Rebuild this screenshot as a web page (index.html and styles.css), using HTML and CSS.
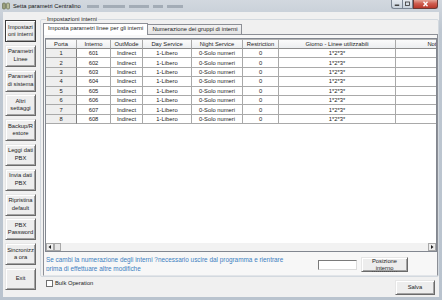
FILE: index.html
```html
<!DOCTYPE html>
<html lang="it">
<head>
  <meta charset="UTF-8">
  <meta name="viewport" content="width=device-width, initial-scale=1.0">
  <title>Setta parametri Centralino</title>
  <link rel="stylesheet" href="styles.css">
</head>
<body>
  <div class="window">
    <div class="titlebar">
      <svg class="app-icon" viewBox="0 0 8 8">
        <rect x="0.5" y="1" width="3" height="6" rx="1" fill="#9a9f7c" stroke="#5f6448" stroke-width="0.6"/>
        <rect x="4.5" y="1" width="3" height="6" rx="1" fill="#b7bb98" stroke="#5f6448" stroke-width="0.6"/>
      </svg>
      <span class="title">Setta parametri Centralino</span>
      <span class="title-blur"><i class="w1"></i><i class="w2"></i><i class="w3"></i><i class="w4"></i><i class="w5"></i></span>
      <div class="controls">
        <span class="ctl min"><svg viewBox="0 0 9 7"><rect x="2.5" y="4" width="4" height="1.2" fill="#333"/></svg></span>
        <span class="ctl max"><svg viewBox="0 0 9 7"><rect x="2.5" y="1.5" width="4" height="3.5" fill="none" stroke="#333" stroke-width="0.8"/></svg></span>
        <span class="ctl close"><svg viewBox="0 0 23 7"><path d="M9.5 1.2 L13.5 5.8 M13.5 1.2 L9.5 5.8" stroke="#fff" stroke-width="1.3"/></svg></span>
      </div>
    </div>

    <div class="client">
      <nav class="sidebar">
        <button class="side-btn active">Impostazi<br>oni interni</button>
        <button class="side-btn">Parametri<br>Linee</button>
        <button class="side-btn">Parametri<br>di sistema</button>
        <button class="side-btn">Altri<br>settaggi</button>
        <button class="side-btn">Backup/R<br>estore</button>
        <button class="side-btn">Leggi dati<br>PBX</button>
        <button class="side-btn">Invia dati<br>PBX</button>
        <button class="side-btn">Ripristina<br>default</button>
        <button class="side-btn">PBX<br>Password</button>
        <button class="side-btn">Sincronizz<br>a ora</button>
        <button class="side-btn">Exit</button>
      </nav>

      <main class="main">
        <fieldset class="group">
          <legend>Impostazioni interni</legend>
          <div class="tabs">
            <span class="tab selected">Imposta parametri linee per gli interni</span>
            <span class="tab">Numerazione dei gruppi di interni</span>
          </div>
          <div class="panel">
            <div class="grid">
              <div class="grid-body">
                <table class="lines">
                  <colgroup>
                    <col class="c-porta"><col class="c-int"><col class="c-out"><col class="c-day">
                    <col class="c-night"><col class="c-restr"><col class="c-giorno"><col class="c-note">
                  </colgroup>
                  <thead>
                    <tr>
                      <th>Porta</th><th>Interno</th><th>OutMode</th><th>Day Service</th>
                      <th>Night Service</th><th>Restriction</th><th>Giorno - Linee utilizzabili</th><th>Note</th>
                    </tr>
                  </thead>
                  <tbody>
                    <tr><td class="rh">1</td><td>601</td><td>Indirect</td><td>1-Libero</td><td>0-Solo numeri</td><td>0</td><td>1*2*3*</td><td></td></tr>
                    <tr><td class="rh">2</td><td>602</td><td>Indirect</td><td>1-Libero</td><td>0-Solo numeri</td><td>0</td><td>1*2*3*</td><td></td></tr>
                    <tr><td class="rh">3</td><td>603</td><td>Indirect</td><td>1-Libero</td><td>0-Solo numeri</td><td>0</td><td>1*2*3*</td><td></td></tr>
                    <tr><td class="rh">4</td><td>604</td><td>Indirect</td><td>1-Libero</td><td>0-Solo numeri</td><td>0</td><td>1*2*3*</td><td></td></tr>
                    <tr><td class="rh">5</td><td>605</td><td>Indirect</td><td>1-Libero</td><td>0-Solo numeri</td><td>0</td><td>1*2*3*</td><td></td></tr>
                    <tr><td class="rh">6</td><td>606</td><td>Indirect</td><td>1-Libero</td><td>0-Solo numeri</td><td>0</td><td>1*2*3*</td><td></td></tr>
                    <tr><td class="rh">7</td><td>607</td><td>Indirect</td><td>1-Libero</td><td>0-Solo numeri</td><td>0</td><td>1*2*3*</td><td></td></tr>
                    <tr><td class="rh">8</td><td>608</td><td>Indirect</td><td>1-Libero</td><td>0-Solo numeri</td><td>0</td><td>1*2*3*</td><td></td></tr>
                  </tbody>
                </table>
              </div>
              <div class="hscroll">
                <span class="sb-btn"><svg viewBox="0 0 6 6"><path d="M4 1 L1.5 3 L4 5 Z" fill="#222"/></svg></span>
                <span class="sb-thumb"></span>
                <span class="sb-track"></span>
                <span class="sb-btn"><svg viewBox="0 0 6 6"><path d="M2 1 L4.5 3 L2 5 Z" fill="#222"/></svg></span>
              </div>
            </div>
            <div class="note-row">
              <p class="note">Se cambi la numerazione degli interni ?necessario uscire dal programma e rientrare<br>prima di effettuare altre modifiche</p>
              <input class="pos-input" type="text">
              <button class="win-btn pos-btn"><span class="focus">Posizione<br>interno</span></button>
            </div>
          </div>
        </fieldset>

        <div class="footer">
          <label class="bulk"><span class="checkbox"></span>Bulk Operation</label>
          <button class="win-btn save-btn">Salva</button>
        </div>
      </main>
    </div>
  </div>
</body>
</html>
```

FILE: styles.css
```css
* {
  box-sizing: border-box;
}
body {
  margin: 0;
  font-family: "Liberation Sans", Arial, sans-serif;
  font-size: 5.8px;
  color: #1b1b1b;
  background: #bcc6d1;
}
.window {
  width: 442px;
  height: 300px;
  display: flex;
  flex-direction: column;
  overflow: hidden;
  background: linear-gradient(#d2d8df, #bec7d1 30px, #b9c3ce);
}

/* title bar */
.titlebar {
  height: 12px;
  display: flex;
  align-items: center;
  padding-left: 2px;
}
.app-icon {
  width: 8px;
  height: 8px;
  margin-right: 3px;
}
.title {
  color: #111;
  line-height: 7px;
}
.title-blur {
  display: flex;
  gap: 4px;
  margin-left: 6px;
  filter: blur(0.7px);
}
.title-blur i {
  display: block;
  height: 3px;
  background: #a3acb6;
}
.title-blur .w1 { width: 12px; }
.title-blur .w2 { width: 22px; }
.title-blur .w3 { width: 20px; }
.title-blur .w4 { width: 10px; }
.title-blur .w5 { width: 16px; }
.controls {
  margin-left: auto;
  margin-right: 4px;
  align-self: flex-start;
  display: flex;
}
.ctl {
  display: block;
  width: 11px;
  height: 9px;
  border: 1px solid #7b8592;
  border-top: none;
  background: linear-gradient(#e4e9ef, #c9d2dc);
}
.ctl svg {
  display: block;
  width: 100%;
  height: 100%;
}
.ctl.min {
  border-radius: 0 0 0 3px;
  border-right: none;
}
.ctl.close {
  width: 25px;
  border-color: #6d3a34;
  border-radius: 0 0 3px 0;
  background: linear-gradient(#e4a497, #cf5d4f 45%, #b8382b);
}

/* client area */
.client {
  flex: 1;
  min-height: 0;
  margin: 0 3px 3px;
  background: #f0f0f0;
  display: flex;
}
.sidebar {
  width: 37px;
  flex-shrink: 0;
  padding: 8px 0 0 2px;
  display: flex;
  flex-direction: column;
  gap: 2.8px;
}
.side-btn {
  width: 31px;
  height: 22px;
  flex-shrink: 0;
  padding: 0;
  font: inherit;
  line-height: 7.5px;
  color: #1b1b1b;
  background: #ededed;
  border: 1px solid;
  border-color: #e6e6e6 #6a6a6a #6a6a6a #e6e6e6;
  box-shadow: inset 1px 1px #fff, inset -1px -1px #a3a3a3;
}
.side-btn.active {
  border-color: #3d3d3d;
}

.main {
  flex: 1;
  min-width: 0;
  display: flex;
  flex-direction: column;
  padding-top: 4px;
}
.group {
  min-width: 0;
  margin: 0;
  padding: 0 0 0 2px;
  border: 1px solid #d3d9df;
  border-radius: 2px;
}
.group legend {
  padding: 0 1px;
  margin-left: 3px;
  line-height: 7px;
  color: #1b1b1b;
}

/* tabs */
.tabs {
  display: flex;
  align-items: flex-end;
  height: 11px;
}
.tab {
  height: 10px;
  line-height: 9px;
  padding: 0 4px;
  white-space: nowrap;
  border: 1px solid #8c8f96;
  border-bottom: none;
  background: linear-gradient(#f3f3f3, #e3e3e3);
}
.tab.selected {
  position: relative;
  z-index: 1;
  height: 12px;
  margin-right: -1px;
  margin-bottom: -1px;
  background: #fff;
}
.panel {
  border: 1px solid #8c8f96;
  border-bottom-color: #e2e5e9;
  background: #f7f7f7;
  padding: 3px 0 1px 1px;
}

/* grid */
.grid {
  height: 214px;
  border: 1px solid #828790;
  background: #fff;
  display: flex;
  flex-direction: column;
}
.grid-body {
  flex: 1;
  min-height: 0;
  overflow: hidden;
}
.lines {
  width: 426px;
  table-layout: fixed;
  border-collapse: separate;
  border-spacing: 0;
}
.c-porta { width: 31px; }
.c-int { width: 34px; }
.c-out { width: 32px; }
.c-day { width: 49px; }
.c-night { width: 51px; }
.c-restr { width: 36px; }
.c-giorno { width: 117px; }
.c-note { width: 76px; }
.lines th,
.lines td {
  padding: 0;
  text-align: center;
  white-space: nowrap;
  overflow: hidden;
  font-weight: normal;
  line-height: 8px;
  border-right: 1px solid #a9a9a9;
  border-bottom: 1px solid #a9a9a9;
}
.lines thead tr {
  height: 10px;
}
.lines th {
  border-top: 1px solid #b4b4b4;
  border-bottom-color: #8c8c8c;
  background: linear-gradient(#fbfbfb, #eceef0);
}
.lines tbody tr {
  height: 9.4px;
}
.lines td.rh {
  background: #eeeeee;
  border-right-color: #7d7d7d;
}

.hscroll {
  height: 8px;
  flex-shrink: 0;
  display: flex;
  background: #f2f2f2;
}
.sb-btn {
  width: 8px;
  height: 8px;
  border: 1px solid #a9a9a9;
  background: #ececec;
}
.sb-btn svg {
  display: block;
  width: 100%;
  height: 100%;
}
.sb-thumb {
  width: 7px;
  border: 1px solid #a9a9a9;
  background: #e6e6e6;
}
.sb-track {
  flex: 1;
}

/* note row */
.note-row {
  display: flex;
  align-items: center;
  height: 19px;
  margin-top: 3px;
}
.note {
  flex: 1;
  min-width: 0;
  margin: 0;
  padding-left: 1px;
  height: 16px;
  overflow: hidden;
  font-size: 6.4px;
  line-height: 9px;
  color: #3d7fc1;
  white-space: nowrap;
  align-self: flex-start;
}
.pos-input {
  width: 39px;
  height: 10px;
  flex-shrink: 0;
  margin: 0 4px 0 2px;
  border: 1px solid #7a7a7a;
  border-right-color: #dcdcdc;
  border-bottom-color: #dcdcdc;
  background: #fff;
}
.win-btn {
  flex-shrink: 0;
  padding: 0;
  font: inherit;
  color: #1b1b1b;
  line-height: 6.5px;
  background: #ededed;
  border: 1px solid;
  border-color: #e6e6e6 #6a6a6a #6a6a6a #e6e6e6;
  box-shadow: inset 1px 1px #fff, inset -1px -1px #a3a3a3;
}
.pos-btn {
  width: 47px;
  height: 15px;
  margin-right: 29px;
}
.pos-btn .focus {
  display: inline-block;
  border-bottom: 1px dotted #555;
}

/* footer */
.footer {
  flex: 1;
  display: flex;
  align-items: center;
  justify-content: space-between;
  padding: 0 4px 0 6px;
}
.bulk {
  align-self: flex-start;
  margin-top: 3px;
  display: flex;
  align-items: center;
  gap: 2px;
  line-height: 7px;
}
.checkbox {
  width: 7px;
  height: 7px;
  border: 1px solid #6f6f6f;
  background: #fff;
}
.save-btn {
  width: 40px;
  height: 15px;
}
```
